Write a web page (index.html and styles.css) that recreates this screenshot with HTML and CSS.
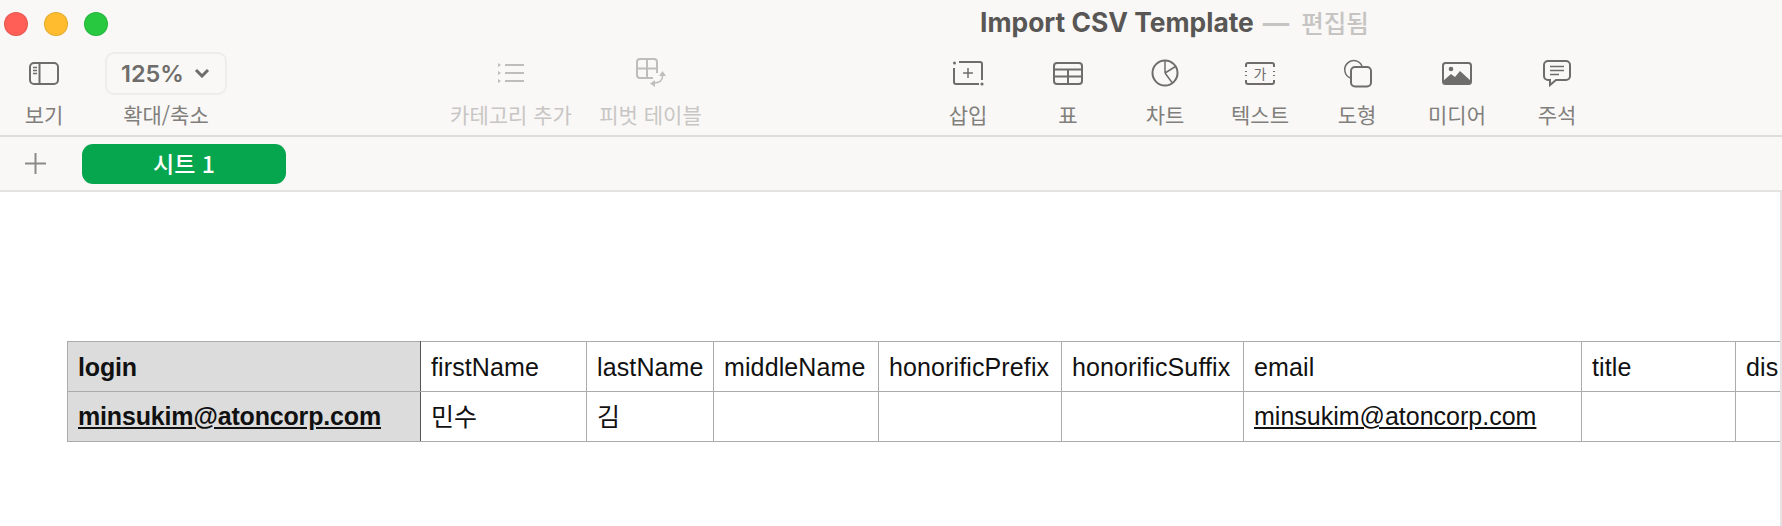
FILE: index.html
```html
<!DOCTYPE html>
<html lang="ko">
<head>
<meta charset="utf-8">
<title>Import CSV Template</title>
<link rel="stylesheet" href="styles.css">
</head>
<body>
<header class="chrome">
  <div class="titlebar">
    <div class="lights">
      <span class="light red"></span>
      <span class="light yellow"></span>
      <span class="light green"></span>
    </div>
    <div class="title"><span class="doc">Import CSV Template</span><span class="dash">—</span><span class="state">편집됨</span></div>
  </div>
  <div class="toolbar">
    <div class="tool w88">
      <div class="slot">
        <svg class="icon" width="32" height="25" viewBox="0 0 32 25"><rect x="2" y="2" width="28" height="21" rx="4"/><path d="M11.500 2v21"/><path class="thin" d="M5 6.500h4M5 9.500h4M5 12.500h4"/></svg>
      </div>
      <div class="label">보기</div>
    </div>
    <div class="tool w156">
      <div class="slot">
        <div class="zoom"><span>125%</span>
          <svg class="chev" width="16" height="10" viewBox="0 0 16 10"><path d="M2 2l6 6 6-6"/></svg>
        </div>
      </div>
      <div class="label">확대/축소</div>
    </div>
    <div class="spacer s199"></div>
    <div class="tool w136 off">
      <div class="slot">
        <svg class="icon" width="28" height="22" viewBox="0 0 28 22"><path d="M8 3h19M8 11h19M8 19h19"/><path class="fill" d="M1 1l3 2-3 2zM1 9l3 2-3 2zM1 17l3 2-3 2z"/></svg>
      </div>
      <div class="label">카테고리 추가</div>
    </div>
    <div class="tool w143 off">
      <div class="slot">
        <svg class="icon" width="30" height="30" viewBox="0 0 30 30"><path d="M17 20H4a3 3 0 0 1-3-3V4a3 3 0 0 1 3-3h14a3 3 0 0 1 3 3v11M1 10.500h20M11 1v19"/><path class="thin" d="M26.500 18c0 5-4 7-9 7"/><path class="fill" d="M26.500 13l3.500 5h-7zM14 25.500l5-3.500v7z"/></svg>
      </div>
      <div class="label">피벗 테이블</div>
    </div>
    <div class="spacer s196"></div>
    <div class="tool w100">
      <div class="slot">
        <svg class="icon" width="32" height="26" viewBox="0 0 32 26"><path d="M2 8v14a2 2 0 0 0 2 2h23M7 2h21a2 2 0 0 1 2 2v16"/><path class="thin" d="M16 8v10M11 13h10"/><circle class="fill" cx="2.500" cy="3" r="1.500"/><circle class="fill" cx="30" cy="24" r="1.600"/></svg>
      </div>
      <div class="label">삽입</div>
    </div>
    <div class="tool w100">
      <div class="slot">
        <svg class="icon" width="32" height="25" viewBox="0 0 32 25"><rect x="2" y="2" width="28" height="21" rx="3"/><path d="M2 8.500h28M2 15.500h28M16 8.500V23"/></svg>
      </div>
      <div class="label">표</div>
    </div>
    <div class="tool w94">
      <div class="slot">
        <svg class="icon" width="28" height="28" viewBox="0 0 28 28"><circle cx="14" cy="14" r="12.500"/><path class="thin" d="M14 14V1.500M14 14l10.500-6.500M14 14l7 9.500"/></svg>
      </div>
      <div class="label">차트</div>
    </div>
    <div class="tool w96">
      <div class="slot">
        <svg class="icon" width="32" height="25" viewBox="0 0 32 25"><path d="M2 6V4a2 2 0 0 1 2-2h24a2 2 0 0 1 2 2v2M2 19v2a2 2 0 0 0 2 2h24a2 2 0 0 0 2-2v-2M2 10v1M2 14v1M30 10v1M30 14v1"/><text class="glyph" x="16" y="18">가</text></svg>
      </div>
      <div class="label">텍스트</div>
    </div>
    <div class="tool w98">
      <div class="slot">
        <svg class="icon" width="32" height="30" viewBox="0 0 32 30"><path class="thin" d="M9.500 20A9 9 0 1 1 21 8"/><rect x="10" y="9" width="20" height="19.500" rx="4"/></svg>
      </div>
      <div class="label">도형</div>
    </div>
    <div class="tool w102">
      <div class="slot">
        <svg class="icon" width="32" height="25" viewBox="0 0 32 25"><rect x="2" y="2" width="28" height="21" rx="2.500"/><path class="fill" d="M2 20l8-7 4 3 5-6 11 10v3H2z"/><circle class="fill" cx="10" cy="8" r="2.300"/></svg>
      </div>
      <div class="label">미디어</div>
    </div>
    <div class="tool w98">
      <div class="slot">
        <svg class="icon" width="30" height="28" viewBox="0 0 30 28"><path d="M6 2h18a4 4 0 0 1 4 4v11a4 4 0 0 1-4 4H14l-6 5v-5H6a4 4 0 0 1-4-4V6a4 4 0 0 1 4-4z"/><path class="thin" d="M8 7.500h14M8 11.500h14M8 15.500h9"/></svg>
      </div>
      <div class="label">주석</div>
    </div>
  </div>
  <div class="tabbar">
    <svg class="plus" width="23" height="23" viewBox="0 0 23 23"><path d="M11.500 1v21M1 11.500h21"/></svg>
    <div class="tab"><span class="tabtext">시트 1</span></div>
  </div>
</header>
<main class="sheet">
  <table class="grid">
    <colgroup>
      <col class="c1"><col class="c2"><col class="c3"><col class="c4"><col class="c5"><col class="c6"><col class="c7"><col class="c8"><col class="c9">
    </colgroup>
    <tr class="head">
      <th>login</th><td>firstName</td><td>lastName</td><td>middleName</td><td>honorificPrefix</td><td>honorificSuffix</td><td>email</td><td>title</td><td>dis</td>
    </tr>
    <tr>
      <th><a href="#">minsukim@atoncorp.com</a></th><td><span class="ko">민수</span></td><td><span class="ko">김</span></td><td></td><td></td><td></td><td><a href="#">minsukim@atoncorp.com</a></td><td></td><td></td>
    </tr>
  </table>
</main>
</body>
</html>
```

FILE: styles.css
```css
* { box-sizing: border-box; }
html, body { margin: 0; height: 100%; }
body {
  width: 1782px;
  height: 526px;
  overflow: hidden;
  background: #fff;
  font-family: "Inter", "Noto Sans CJK KR", sans-serif;
}
.chrome { background: #f9f8f6; }
.titlebar {
  height: 48px;
  display: flex;
  align-items: center;
}
.lights { display: flex; gap: 16px; padding-left: 4px; width: 980px; }
.light { width: 24px; height: 24px; border-radius: 50%; border: 1px solid rgba(0,0,0,.1); }
.red { background: #ff5f57; }
.yellow { background: #febc2e; }
.green { background: #28c840; }
.title {
  font-size: 26.400px;
  font-weight: 700;
  color: #595755;
  white-space: nowrap;
  display: flex;
  align-items: center;
  padding-bottom: 4px;
}
.dash { color: #c6c4c2; margin: 0 12px 0 9px; font-weight: 700; }
.state { color: #c6c4c2; font-weight: 500; font-size: 24.500px; font-family: "Noto Sans CJK KR", sans-serif; }
.toolbar {
  height: 89px;
  display: flex;
  align-items: flex-start;
  border-bottom: 2px solid #dfdddb;
  padding-top: 3px;
}
.tool { display: flex; flex-direction: column; align-items: center; flex: none; }
.w88 { width: 88px; }
.w94 { width: 94px; }
.w96 { width: 96px; }
.w98 { width: 98px; }
.w100 { width: 100px; }
.w102 { width: 102px; }
.w136 { width: 136px; }
.w143 { width: 143px; }
.w156 { width: 156px; }
.spacer { flex: none; }
.s199 { width: 199px; }
.s196 { width: 196px; }
.slot { height: 44px; display: flex; align-items: center; justify-content: center; }
.label {
  height: 30px;
  margin-top: 4px;
  line-height: 30px;
  font-size: 21px;
  color: #817f7c;
  white-space: nowrap;
  font-family: "Noto Sans CJK KR", sans-serif;
}
.icon { fill: none; stroke: #6f6d6a; stroke-width: 2; display: block; overflow: visible; }
.icon .thin { stroke-width: 1.5; }
.icon .fill { fill: #6f6d6a; stroke: none; }
.icon .glyph {
  fill: #6f6d6a;
  stroke: none;
  font-size: 14px;
  text-anchor: middle;
  font-family: "Noto Sans CJK KR", sans-serif;
}
.off .icon { stroke: #bfbdbb; }
.off .icon .fill { fill: #bfbdbb; }
.off .label { color: #c8c6c4; }
.zoom {
  width: 122px;
  height: 43px;
  border: 2px solid #efedeb;
  border-radius: 9px;
  display: flex;
  align-items: center;
  gap: 10px;
  padding-left: 14px;
  font-size: 23.500px;
  font-weight: 600;
  color: #6f6d6a;
}
.chev { fill: none; stroke: #6f6d6a; stroke-width: 3; display: block; }
.tabbar {
  height: 55px;
  display: flex;
  align-items: center;
  border-bottom: 2px solid #e5e3e1;
  padding-left: 24px;
  gap: 35px;
}
.plus { fill: none; stroke: #8c8a88; stroke-width: 2; display: block; }
.tab {
  width: 204px;
  height: 40px;
  background: #06a64f;
  color: #fff;
  border-radius: 11px;
  display: flex;
  align-items: center;
  justify-content: center;
  font-size: 23px;
  font-weight: 500;
  font-family: "Noto Sans CJK KR", sans-serif;
}
.tabtext { padding-bottom: 2px; }
.sheet {
  height: 334px;
  padding: 149px 0 0 67px;
  width: 1782px;
  overflow: hidden;
  border-right: 2px solid #e5e3e3;
}
.grid {
  border-collapse: collapse;
  table-layout: fixed;
  width: 1855px;
  font-family: "Liberation Sans", "Noto Sans CJK KR", sans-serif;
  font-size: 25px;
  color: #111;
}
.c1 { width: 353px; }
.c2 { width: 166px; }
.c3 { width: 127px; }
.c4 { width: 165px; }
.c5 { width: 183px; }
.c6 { width: 182px; }
.c7 { width: 338px; }
.c8 { width: 154px; }
.c9 { width: 187px; }
.grid tr { height: 50px; }
.grid th, .grid td {
  border: 1px solid #ababab;
  padding: 0 10px;
  text-align: left;
  white-space: nowrap;
  overflow: hidden;
}
.grid th { background: #dcdcdc; font-weight: 700; letter-spacing: -0.16px; border-right: 1px solid #555; }
.grid .head th, .grid .head td { padding-top: 2px; }
.grid .head td { letter-spacing: 0.12px; }
.grid a { color: inherit; text-decoration: underline; }
.ko { position: relative; top: -2px; }
```
